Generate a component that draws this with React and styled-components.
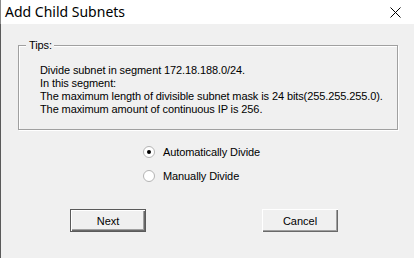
import React, { useState } from "react";
import styled, { createGlobalStyle } from "styled-components";

const GlobalStyle = createGlobalStyle`
    html, body {
        margin: 0;
        padding: 0;
        background: #f0f0f0;
    }
    #root {
        width: 414px;
        height: 258px;
        overflow: hidden;
    }
`;

const Dialog = styled.div`
    width: 414px;
    height: 258px;
    display: flex;
    flex-direction: column;
    background: #f0f0f0;
    font-family: "Liberation Sans", Arial, sans-serif;
    font-size: 11px;
    letter-spacing: -0.1px;
    color: #000;
`;

const TitleBar = styled.div`
    height: 24px;
    flex: none;
    display: flex;
    align-items: center;
    justify-content: space-between;
    background: #fff;
    padding: 0 13px 0 4px;
    box-sizing: border-box;
    border-left: 1px solid #8a8a8a;
`;

const Title = styled.span`
    font-family: "Noto Sans", "Open Sans", sans-serif;
    font-size: 14px;
    letter-spacing: 0;
    color: #000;
    line-height: 1;
`;

const CloseButton = styled.button`
    border: none;
    background: none;
    padding: 0;
    width: 12px;
    height: 12px;
    display: flex;
    align-items: center;
    justify-content: center;
    cursor: default;
`;

const Body = styled.div`
    flex: 1;
    display: flex;
    flex-direction: column;
    border-left: 1px solid #5a5a5a;
    padding: 21px 0 0 17px;
`;

const GroupBox = styled.div`
    position: relative;
    width: 380px;
    height: 85px;
    box-sizing: border-box;
    border: 1px solid #a0a0a0;
    box-shadow: 1px 1px 0 #fff, inset 1px 1px 0 #fff;
    padding: 18px 0 0 21px;
`;

const GroupLabel = styled.span`
    position: absolute;
    top: -7px;
    left: 7px;
    padding: 0 2px 0 3px;
    background: #f0f0f0;
    line-height: 13px;
`;

const TipLine = styled.div`
    line-height: 13px;
    white-space: nowrap;
`;

const RadioGroup = styled.div`
    display: flex;
    flex-direction: column;
    gap: 8px;
    margin: 14px 0 0 125px;
`;

const RadioRow = styled.label`
    display: flex;
    align-items: center;
    height: 16px;
    gap: 8px;
    cursor: default;
`;

const RadioCircle = styled.span`
    width: 12px;
    height: 12px;
    box-sizing: border-box;
    border-radius: 50%;
    border: 1px solid #b4b4b4;
    background: #fff;
    display: flex;
    align-items: center;
    justify-content: center;
    &::after {
        content: "";
        width: 4px;
        height: 4px;
        border-radius: 50%;
        background: ${(p) => (p.$checked ? "#000" : "transparent")};
    }
`;

const ButtonRow = styled.div`
    display: flex;
    gap: 116px;
    margin: 25px 0 0 52px;
`;

const Button = styled.button`
    width: 76px;
    height: 23px;
    box-sizing: border-box;
    background: #f0f0f0;
    font-family: "Liberation Sans", Arial, sans-serif;
    font-size: 11px;
    color: #000;
    padding: 0;
    border: ${(p) => (p.$default ? "1px solid #5a5a5a" : "none")};
    box-shadow: inset 1px 1px 0 #fff, inset -1px -1px 0 #696969, inset -2px -2px 0 #a0a0a0;
    cursor: default;
`;

const tips = [
    "Divide subnet in segment 172.18.188.0/24.",
    "In this segment:",
    "The maximum length of divisible subnet mask is 24 bits(255.255.255.0).",
    "The maximum amount of continuous IP is 256.",
];

const App = () => {
    const [mode, setMode] = useState("auto");

    return (
        <>
            <GlobalStyle />
            <Dialog>
                <TitleBar>
                    <Title>Add Child Subnets</Title>
                    <CloseButton aria-label="Close">
                        <svg width="11" height="11" viewBox="0 0 11 11">
                            <path d="M0.5 0.5 L10.5 10.5 M10.5 0.5 L0.5 10.5" stroke="#000" strokeWidth="1" />
                        </svg>
                    </CloseButton>
                </TitleBar>
                <Body>
                    <GroupBox>
                        <GroupLabel>Tips:</GroupLabel>
                        {tips.map((t) => (
                            <TipLine key={t}>{t}</TipLine>
                        ))}
                    </GroupBox>
                    <RadioGroup>
                        <RadioRow onClick={() => setMode("auto")}>
                            <RadioCircle $checked={mode === "auto"} />
                            Automatically Divide
                        </RadioRow>
                        <RadioRow onClick={() => setMode("manual")}>
                            <RadioCircle $checked={mode === "manual"} />
                            Manually Divide
                        </RadioRow>
                    </RadioGroup>
                    <ButtonRow>
                        <Button $default>Next</Button>
                        <Button>Cancel</Button>
                    </ButtonRow>
                </Body>
            </Dialog>
        </>
    );
};

export default App;
